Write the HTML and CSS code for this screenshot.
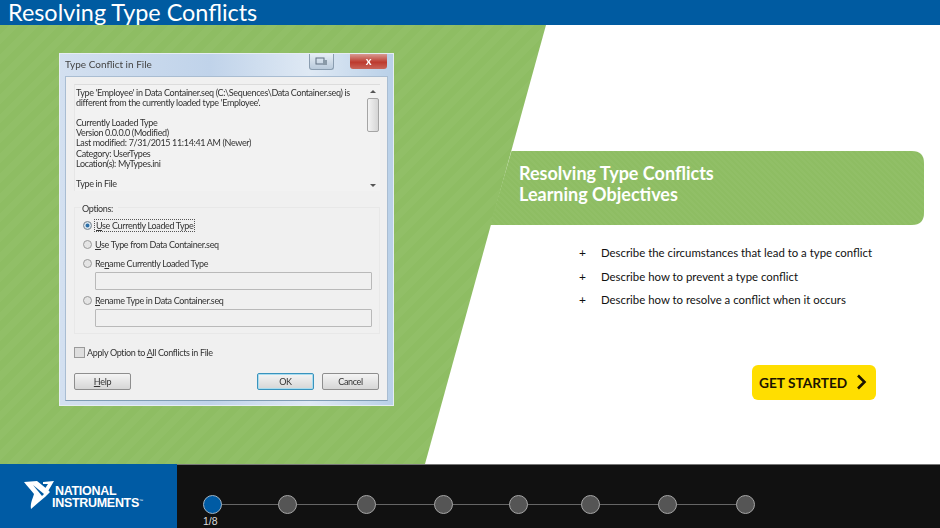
FILE: index.html
```html
<!DOCTYPE html>
<html lang="en">
<head>
    <meta charset="UTF-8">
    <title>Resolving Type Conflicts</title>
    <link rel="stylesheet" href="styles.css">
</head>
<body>
    <header class="top-bar">
        <h1>Resolving Type Conflicts</h1>
    </header>

    <main class="slide">
        <div class="green-back"></div>

        <section class="left-col">
            <div class="dialog">
                <div class="dialog-title">
                    <span>Type Conflict in File</span>
                    <div class="title-btn-help">
                        <svg width="13" height="9" viewBox="0 0 13 9"><rect x="1" y="1" width="8" height="6" fill="none" stroke="#5f6f80"/><rect x="8" y="3" width="4" height="5" fill="#8a9aa8"/></svg>
                    </div>
                    <div class="title-btn-close">x</div>
                </div>
                <div class="dialog-body">
                    <div class="msg-box">
                        <div class="msg-text">
                            <p>Type 'Employee' in Data Container.seq (C:\Sequences\Data Container.seq) is different from the currently loaded type 'Employee'.</p>
                            <p>Currently Loaded Type<br>Version 0.0.0.0 (Modified)<br>Last modified: 7/31/2015 11:14:41 AM (Newer)<br>Category: UserTypes<br>Location(s): MyTypes.ini</p>
                            <p>Type in File</p>
                        </div>
                        <div class="scroll">
                            <span class="arrow-up"></span>
                            <span class="thumb"></span>
                            <span class="arrow-down"></span>
                        </div>
                    </div>

                    <div class="options">
                        <div class="options-label">Options:</div>
                        <div class="opt opt-first"><span class="radio radio-on"></span><span class="focused"><u>U</u>se Currently Loaded Type</span></div>
                        <div class="opt opt-second"><span class="radio"></span><span><u>U</u>se Type from Data Container.seq</span></div>
                        <div class="opt"><span class="radio"></span><span>Re<u>n</u>ame Currently Loaded Type</span></div>
                        <div class="field"></div>
                        <div class="opt opt-tight"><span class="radio"></span><span><u>R</u>ename Type in Data Container.seq</span></div>
                        <div class="field"></div>
                    </div>

                    <div class="apply"><span class="check"></span><span>Apply Option to <u>A</u>ll Conflicts in File</span></div>

                    <div class="btn-row">
                        <div class="btn"><u>H</u>elp</div>
                        <div class="btn btn-ok">OK</div>
                        <div class="btn">Cancel</div>
                    </div>
                </div>
            </div>
        </section>

        <section class="right-col">
            <div class="banner">
                <h2>Resolving Type Conflicts<br>Learning Objectives</h2>
            </div>
            <ul class="objectives">
                <li>Describe the circumstances that lead to a type conflict</li>
                <li>Describe how to prevent a type conflict</li>
                <li>Describe how to resolve a conflict when it occurs</li>
            </ul>
            <div class="start-wrap">
                <a class="start-btn">GET STARTED
                    <svg width="11" height="16" viewBox="0 0 11 16"><path d="M2 1.5 L8.500 8 L2 14.500" fill="none" stroke="#1c1400" stroke-width="2.600"/></svg>
                </a>
            </div>
        </section>
    </main>

    <footer class="bottom-bar">
        <div class="logo">
            <svg class="logo-mark" width="31" height="29" viewBox="0 0 31 29">
                <path d="M0 1 L13 0 C17 3 22 7 26 11 L21 16 L15 21 L7 28 C6 22 9 17 10 13 C7 9 3 5 0 1 Z" fill="#fff"/>
                <path d="M19 1 L30 0 L23 12 L20 9 L24 3 L19 3 Z" fill="#fff"/>
                <path d="M9 4 L20 13 L18 15 Z" fill="#005ba4"/>
            </svg>
            <div class="logo-text">
                <div class="logo-line1">NATIONAL</div>
                <div class="logo-line2">INSTRUMENTS<sup>™</sup></div>
            </div>
        </div>
        <div class="progress">
            <div class="line"></div>
            <div class="step step-on"><span class="num">1/8</span></div>
            <div class="step"></div>
            <div class="step"></div>
            <div class="step"></div>
            <div class="step"></div>
            <div class="step"></div>
            <div class="step"></div>
            <div class="step"></div>
        </div>
    </footer>
</body>
</html>
```
FILE: styles.css
```css
html, body {
    margin: 0;
    padding: 0;
}

body {
    width: 940px;
    height: 528px;
    overflow: hidden;
    background: #fff;
    font-family: "Lato", sans-serif;
    display: flex;
    flex-direction: column;
}

/* top bar */
.top-bar {
    height: 25px;
    background: #005ba1;
    flex: none;
}

.top-bar h1 {
    margin: 0;
    padding-left: 8px;
    color: #fff;
    font-size: 23.400px;
    font-weight: 400;
    line-height: 24px;
}

/* main part */
.slide {
    position: relative;
    flex: none;
    height: 439px;
    display: flex;
}

.green-back {
    position: absolute;
    left: 0;
    top: 0;
    width: 546px;
    height: 439px;
    clip-path: polygon(0 0, 546px 0, 425px 439px, 0 439px);
    background: repeating-linear-gradient(135deg, #8ebd63 0, #8ebd63 7px, #91bf67 7px, #91bf67 14px);
}

.left-col {
    position: relative;
    width: 490px;
    flex: none;
    padding: 28px 0 0 59px;
    box-sizing: border-box;
}

.right-col {
    position: relative;
    width: 434px;
    flex: none;
    padding-top: 126px;
    box-sizing: border-box;
}

/* dialog */
.dialog {
    width: 335px;
    height: 353px;
    box-sizing: border-box;
    padding: 0 5px 4px;
    background: linear-gradient(90deg, #d3e0f0, #c0d3ea 45%, #dfe9f4 75%, #b9d0e8);
    border: 1px solid #e6edf3;
    display: flex;
    flex-direction: column;
    font-family: "Lato", sans-serif;
    font-size: 9px;
    letter-spacing: -0.35px;
    color: #333;
    filter: blur(0.35px);
}

.dialog-title {
    height: 22px;
    flex: none;
    display: flex;
    align-items: flex-start;
    font-size: 10px;
    letter-spacing: 0;
    color: #444;
    line-height: 21px;
}

.dialog-title > span {
    flex: 1;
}

.title-btn-help {
    width: 23px;
    height: 15px;
    margin-right: 16px;
    border: 1px solid #8a9db0;
    border-top: 0;
    border-radius: 0 0 3px 3px;
    background: linear-gradient(#e6eef6, #b9cadb);
    display: flex;
    align-items: center;
    justify-content: center;
}

.title-btn-close {
    width: 37px;
    height: 15px;
    margin-right: 1px;
    border-radius: 0 0 3px 3px;
    background: linear-gradient(#d89a92, #bd3a2e 55%, #c9665a);
    color: #fff;
    font-size: 11px;
    font-weight: 700;
    line-height: 13px;
    text-align: center;
}

.dialog-body {
    flex: 1;
    background: #f0f0f0;
    border: 1px solid #a9bdd2;
    border-bottom-color: #7f9db5;
    padding: 7px 7px 0 8px;
    display: flex;
    flex-direction: column;
}

.msg-box {
    height: 106px;
    flex: none;
    display: flex;
    border-top: 1px solid #dcdcdc;
    border-left: 1px solid #e6e6e6;
    background: #f2f2f2;
    overflow: hidden;
}

.msg-text {
    flex: 1;
    padding: 3px 2px 0 1px;
    line-height: 10.100px;
}

.msg-text p {
    margin: 0 0 10.100px;
}

.scroll {
    width: 14px;
    flex: none;
    display: flex;
    flex-direction: column;
    align-items: center;
}

.arrow-up, .arrow-down {
    display: block;
    width: 0;
    height: 0;
    border-left: 3px solid transparent;
    border-right: 3px solid transparent;
}

.arrow-up {
    margin-top: 5px;
    border-bottom: 3px solid #555;
}

.arrow-down {
    margin-top: auto;
    margin-bottom: 4px;
    border-top: 3px solid #555;
}

.thumb {
    width: 10px;
    height: 32px;
    margin-top: 5px;
    border: 1px solid #a5a5a5;
    border-radius: 2px;
    background: linear-gradient(90deg, #f3f3f3, #d5d5d5);
}

.options {
    height: 127px;
    flex: none;
    margin-top: 16px;
    position: relative;
    box-sizing: border-box;
    border: 1px solid #e8e8e8;
    padding: 0 8px 0 8px;
}

.options-label {
    margin: -5px 0 0 -2px;
    line-height: 11px;
    background: #f0f0f0;
    width: 36px;
    padding-left: 1px;
}

.opt {
    display: flex;
    align-items: center;
    gap: 3px;
    height: 11px;
    margin-top: 8px;
}

.opt-first {
    margin-top: 5px;
    height: 13px;
}

.opt-second {
    margin-top: 7px;
}

.opt-tight {
    margin-top: 5px;
}

.radio {
    width: 7px;
    height: 7px;
    border-radius: 50%;
    border: 1px solid #9a9a9a;
    background: #e4e4e4;
    flex: none;
}

.radio-on {
    background: #2c6fa8;
    box-shadow: inset 0 0 0 1.500px #dfe8f0;
}

.focused {
    border: 1px dotted #555;
    padding: 0 1px;
    margin-left: -1px;
}

.field {
    margin: 3px 0 0 12px;
    width: 277px;
    height: 18px;
    border: 1px solid #b9b9b9;
    border-radius: 1px;
    background: #f0f0f0;
    box-sizing: border-box;
}

.apply {
    display: flex;
    align-items: center;
    gap: 2px;
    margin-top: 13px;
    height: 11px;
}

.check {
    width: 9px;
    height: 9px;
    border: 1px solid #9a9a9a;
    background: #dedede;
    flex: none;
}

.btn-row {
    display: flex;
    gap: 8px;
    margin-top: 15px;
    margin-right: 1px;
    line-height: 15px;
}

.btn {
    width: 57px;
    height: 17px;
    box-sizing: border-box;
    border: 1px solid #8e8e8e;
    border-radius: 2px;
    background: linear-gradient(#f4f4f4, #d6d6d6);
    text-align: center;
}

.btn:first-child {
    margin-right: auto;
}

.btn-ok {
    border: 1px solid #3a93bd;
    box-shadow: inset 0 0 0 1px #a9dcef;
}

/* right side */
.banner {
    width: 434px;
    height: 74px;
    box-sizing: border-box;
    padding: 12px 0 0 29px;
    clip-path: path("M21.5 0 H422 Q434 0 434 12 V62 Q434 74 422 74 H0 Z");
    background: repeating-linear-gradient(45deg, #8ebd63 0, #8ebd63 2px, #91bf67 2px, #91bf67 4px);
}

.banner h2 {
    margin: 0;
    color: #fff;
    font-size: 18px;
    line-height: 21px;
    font-weight: 700;
}

.objectives {
    list-style: none;
    margin: 16px 0 0;
    padding: 0 0 0 111px;
    color: #111;
    font-size: 11.400px;
    line-height: 23.500px;
}

.objectives li::before {
    content: "+";
    display: inline-block;
    width: 22px;
    margin-left: -22px;
    font-size: 12px;
}

.start-wrap {
    margin-top: 53px;
    padding-left: 262px;
}

.start-btn {
    width: 124px;
    height: 35px;
    box-sizing: border-box;
    padding-left: 7px;
    display: flex;
    align-items: center;
    gap: 9px;
    background: #ffde00;
    border-radius: 6px;
    color: #1c1400;
    font-size: 13.700px;
    font-weight: 700;
}

/* footer */
.bottom-bar {
    flex: 1;
    background: #111;
    border-top: 1px solid #777;
    box-sizing: border-box;
    display: flex;
}

.logo {
    width: 177px;
    flex: none;
    margin-top: -1px;
    background: #005ba4;
    display: flex;
    align-items: center;
    padding-left: 24px;
    box-sizing: border-box;
    color: #fff;
}

.logo-mark {
    flex: none;
    margin-top: -1px;
}

.logo-text {
    font-family: "Liberation Sans", sans-serif;
    font-weight: 700;
    font-size: 12.500px;
    line-height: 12px;
    letter-spacing: -0.3px;
    margin-top: 2px;
}

.logo-line2 {
    margin-left: -3px;
}

.logo-text sup {
    font-size: 4px;
    font-weight: 400;
    line-height: 0;
}

.progress {
    position: relative;
    margin-left: 26px;
    width: 552px;
    height: 63px;
    display: flex;
    padding-top: 30px;
    box-sizing: border-box;
}

.line {
    position: absolute;
    left: 10px;
    right: 10px;
    top: 39px;
    height: 1px;
    background: #666;
}

/* the dots in the reference are not evenly spaced */
.step {
    position: relative;
    flex: none;
    width: 19px;
    height: 19px;
    margin-left: 57px;
    border-radius: 50%;
    box-sizing: border-box;
    border: 1px solid #a5a5a5;
    background: #555;
}

.step:nth-child(2) { margin-left: 0; }
.step:nth-child(3) { margin-left: 56px; }
.step:nth-child(4) { margin-left: 60px; }
.step:nth-child(5) { margin-left: 58px; }
.step:nth-child(6) { margin-left: 56px; }
.step:nth-child(7) { margin-left: 53px; }
.step:nth-child(8) { margin-left: 58px; }
.step:nth-child(9) { margin-left: 59px; }

.step-on {
    background: #005ba4;
    border-color: #9fb4c6;
}

.num {
    position: absolute;
    left: -1px;
    top: 19px;
    color: #ddd;
    font-family: "Liberation Sans", sans-serif;
    font-size: 10.500px;
    line-height: 12px;
}
```
